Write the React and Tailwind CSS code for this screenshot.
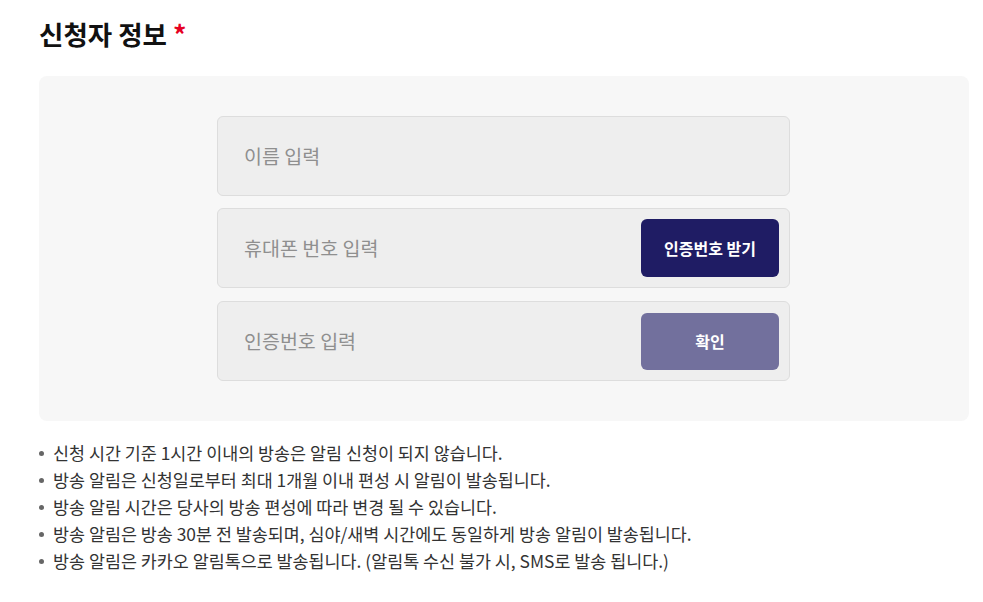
const notes = [
  "신청 시간 기준 1시간 이내의 방송은 알림 신청이 되지 않습니다.",
  "방송 알림은 신청일로부터 최대 1개월 이내 편성 시 알림이 발송됩니다.",
  "방송 알림 시간은 당사의 방송 편성에 따라 변경 될 수 있습니다.",
  "방송 알림은 방송 30분 전 발송되며, 심야/새벽 시간에도 동일하게 방송 알림이 발송됩니다.",
  "방송 알림은 카카오 알림톡으로 발송됩니다. (알림톡 수신 불가 시, SMS로 발송 됩니다.)",
];

const Field = ({ placeholder, children }) => (
  <div className="flex h-[80px] items-center rounded-md border border-[#dddddd] bg-[#eeeeee] pl-[26px] pr-[10px]">
    <input
      placeholder={placeholder}
      className="flex-1 bg-transparent text-[19.5px] text-[#333] placeholder-[#8f8f8f] outline-none"
    />
    {children}
  </div>
);

export default function App() {
  return (
    <div className="bg-white px-[39px] pt-[14px] font-['Noto_Sans_CJK_KR','Noto_Sans',sans-serif] text-[#222]">
      <h2 className="text-[26.5px] font-bold leading-[40px] text-[#111]">
        신청자 정보 <span className="text-[#e60023]">*</span>
      </h2>
      <div className="mt-[22px] w-[930px] rounded-lg bg-[#f7f7f7] py-[40px]">
        <div className="ml-[178px] flex w-[573px] flex-col gap-[12px]">
          <Field placeholder="이름 입력" />
          <Field placeholder="휴대폰 번호 입력">
            <button className="h-[58px] w-[138px] rounded-md bg-[#1f1c64] text-[16px] font-bold text-white">
              인증번호 받기
            </button>
          </Field>
          <div className="pt-px">
            <Field placeholder="인증번호 입력">
              <button className="h-[57px] w-[138px] rounded-md bg-[#72709d] text-[16px] font-bold text-white">
                확인
              </button>
            </Field>
          </div>
        </div>
      </div>
      <ul className="mt-[18px] flex flex-col text-[17.4px] leading-[27px] text-[#333]">
        {notes.map((n) => (
          <li key={n} className="flex items-start">
            <span className="mr-[9px] mt-[12px] h-[5px] w-[5px] shrink-0 rounded-full bg-[#666]" />
            <span>{n}</span>
          </li>
        ))}
      </ul>
    </div>
  );
}
